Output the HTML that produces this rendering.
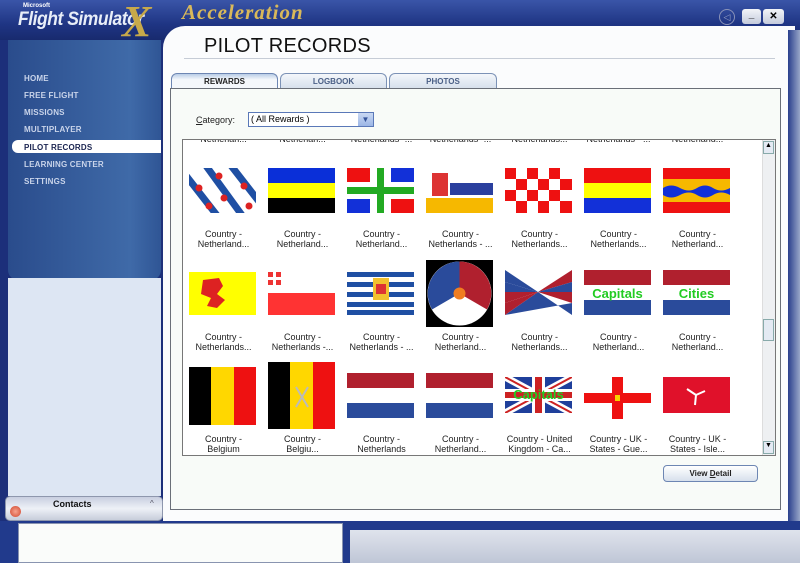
<!DOCTYPE html>
<html><head><meta charset="utf-8"><style>
*{margin:0;padding:0;box-sizing:border-box}
body{width:800px;height:563px;overflow:hidden;position:relative;font-family:"Liberation Sans",sans-serif;background:#1c2f7a}
.a{position:absolute}
.nav{position:absolute;left:24px;font-size:8px;font-weight:bold;color:#c9d4ea;letter-spacing:.2px}
.lbl{position:absolute;width:79px;text-align:center;font-size:9px;line-height:10px;color:#222}
.tab{position:absolute;top:73px;height:15px;font-size:8px;font-weight:bold;color:#4a5f86;text-align:center;line-height:15px;border:1px solid #7c92b6;border-bottom:none;border-radius:6px 6px 0 0;background:linear-gradient(#f4f7fb,#d7e0ec)}
svg{position:absolute}
</style></head><body>
<div class="a" style="left:0;top:0;width:800px;height:40px;background:linear-gradient(#3a55a8,#1f3584 60%,#182a6e)"></div>
<div class="a" style="font-size:6px;color:#fff;font-weight:bold;left:23px;top:3px">Microsoft</div>
<div class="a" style="left:18px;top:9px;font-size:19px;font-style:italic;font-weight:bold;color:#e8eef8;transform:scaleX(.92);transform-origin:left;letter-spacing:-.5px">Flight Simulator</div>
<div class="a" style="left:122px;top:-4px;font-size:44px;font-style:italic;font-weight:bold;color:#c7a94a;font-family:'Liberation Serif',serif">X</div>
<div class="a" style="left:182px;top:0px;font-size:21px;font-style:italic;font-weight:bold;color:#d9b95a;font-family:'Liberation Serif',serif;letter-spacing:1px">Acceleration</div>
<div class="a" style="left:40px;top:44px;width:120px;height:2px;background:#c7a94a"></div>
<div class="a" style="left:719px;top:9px;width:16px;height:16px;border-radius:50%;border:1px solid #8a93b8;color:#9aa3c6;font-size:9px;text-align:center;line-height:14px">◁</div>
<div class="a" style="left:742px;top:9px;width:19px;height:15px;border-radius:3px;background:linear-gradient(#f2f4f8,#c4cbdc);font-size:10px;text-align:center;line-height:12px;font-weight:bold">_</div>
<div class="a" style="left:763px;top:9px;width:21px;height:15px;border-radius:3px;background:linear-gradient(#f2f4f8,#c4cbdc);font-size:10px;text-align:center;line-height:15px;font-weight:bold">✕</div>
<div class="a" style="left:163px;top:26px;width:632px;height:497px;background:#fbfcfd;border-radius:22px 0 0 0"></div>
<div class="a" style="left:788px;top:30px;width:12px;height:533px;background:linear-gradient(90deg,#2a3f8d,#98a6c8)"></div>
<div class="a" style="left:204px;top:35px;font-size:20px;color:#111;letter-spacing:.3px">PILOT RECORDS</div>
<div class="a" style="left:184px;top:58px;width:591px;height:1px;background:#c6ccd6"></div>
<div class="a" style="left:8px;top:40px;width:153px;height:240px;background:linear-gradient(90deg,#2a4c8c,#3f6aa8 80%,#2f5595);border-radius:0 0 10px 10px"></div>
<div class="a" style="left:8px;top:278px;width:153px;height:218px;background:#dde6f3"></div>
<div class="nav" style="top:74px">HOME</div>
<div class="nav" style="top:91px">FREE FLIGHT</div>
<div class="nav" style="top:108px">MISSIONS</div>
<div class="nav" style="top:125px">MULTIPLAYER</div>
<div class="a" style="left:12px;top:140px;width:149px;height:13px;background:#fff;border-radius:6px 0 0 6px"></div>
<div class="nav" style="top:143px;color:#1a2450">PILOT RECORDS</div>
<div class="nav" style="top:160px">LEARNING CENTER</div>
<div class="nav" style="top:177px">SETTINGS</div>
<div class="a" style="left:5px;top:496px;width:158px;height:25px;background:linear-gradient(#c8cfe0,#eef1f7 50%,#c7cdda);border:1px solid #8e97ad;border-radius:5px"></div>
<div class="a" style="left:53px;top:499px;font-size:9px;font-weight:bold;color:#111">Contacts</div>
<div class="a" style="left:150px;top:499px;font-size:8px;color:#556">^</div>
<div class="a" style="left:10px;top:506px;width:11px;height:11px;border-radius:50%;background:radial-gradient(#f7a38e,#d0452c)"></div>
<div class="a" style="left:0;top:521px;width:800px;height:42px;background:#213a8c"></div>
<div class="a" style="left:350px;top:530px;width:450px;height:33px;background:linear-gradient(#dfe3ec,#bfc6d6)"></div>
<div class="a" style="left:18px;top:523px;width:325px;height:40px;background:#fafcfa;border:1px solid #8994b0"></div>
<div class="tab" style="left:171px;width:107px;color:#222;background:linear-gradient(#b9cde6,#f4f7fb 40%);border-color:#6d86b3">REWARDS</div>
<div class="tab" style="left:280px;width:107px">LOGBOOK</div>
<div class="tab" style="left:389px;width:108px">PHOTOS</div>
<div class="a" style="left:170px;top:88px;width:611px;height:422px;border:1px solid #6a6f78;background:#f8fbf8"></div>
<div class="a" style="left:196px;top:115px;font-size:9px;color:#222"><u>C</u>ategory:</div>
<div class="a" style="left:248px;top:112px;width:126px;height:15px;border:1px solid #5a78b8;background:#fff;font-size:9px;line-height:13px;padding-left:2px">( All Rewards )</div>
<div class="a" style="left:358px;top:113px;width:15px;height:13px;background:linear-gradient(#c9d8f3,#9cb6e6);color:#34539a;font-size:8px;text-align:center;line-height:13px">▼</div>
<div class="a" style="left:182px;top:139px;width:594px;height:317px;border:1px solid #777;background:#fff;overflow:hidden">
<div class="lbl" style="left:1px;top:-6px">Netherlan...</div>
<div class="lbl" style="left:80px;top:-6px">Netherlan...</div>
<div class="lbl" style="left:159px;top:-6px">Netherlands -...</div>
<div class="lbl" style="left:238px;top:-6px">Netherlands -...</div>
<div class="lbl" style="left:317px;top:-6px">Netherlands...</div>
<div class="lbl" style="left:396px;top:-6px">Netherlands - ...</div>
<div class="lbl" style="left:475px;top:-6px">Netherland...</div>
<div class="a" style="right:0;top:0;width:13px;height:315px;background:#eef0f2;border-left:1px solid #ddd"></div>
<div class="a" style="right:1px;top:1px;width:11px;height:13px;border:1px solid #8aa;background:#e4eaf3;font-size:7px;text-align:center">▲</div>
<div class="a" style="right:1px;top:179px;width:11px;height:22px;border:1px solid #8aa;background:#e4eaf3"></div>
<div class="a" style="right:1px;bottom:1px;width:11px;height:13px;border:1px solid #8aa;background:#e4eaf3;font-size:7px;text-align:center">▼</div>
</div>

<svg style="left:189px;top:168px" width="67" height="45"><rect width="67" height="45" fill="#fff"/><g stroke="#1f4fa3" stroke-width="7"><line x1="-5" y1="5" x2="30" y2="50"/><line x1="15" y1="-5" x2="55" y2="50"/><line x1="40" y1="-5" x2="75" y2="40"/></g><g fill="#d22"><circle cx="10" cy="20" r="3.5"/><circle cx="30" cy="8" r="3.5"/><circle cx="35" cy="30" r="3.5"/><circle cx="55" cy="18" r="3.5"/><circle cx="60" cy="38" r="3.5"/><circle cx="20" cy="38" r="3.5"/></g></svg>
<svg style="left:268px;top:168px" width="67" height="45"><rect width="67" height="15" fill="#0a2fd8"/><rect y="15" width="67" height="15" fill="#ff0"/><rect y="30" width="67" height="15" fill="#000"/></svg>
<svg style="left:347px;top:168px" width="67" height="45"><rect width="67" height="45" fill="#fff"/><rect x="0" y="0" width="23" height="14" fill="#e11"/><rect x="44" y="0" width="23" height="14" fill="#1230d8"/><rect x="0" y="31" width="23" height="14" fill="#1230d8"/><rect x="44" y="31" width="23" height="14" fill="#e11"/><rect x="0" y="19" width="67" height="7" fill="#2a2"/><rect x="30" y="0" width="7" height="45" fill="#2a2"/></svg>
<svg style="left:426px;top:168px" width="67" height="45"><rect width="67" height="45" fill="#fff"/><rect y="30" width="67" height="15" fill="#f6b800"/><rect x="24" y="15" width="43" height="12" fill="#2a3f9e"/><path d="M6 5 L22 5 L22 28 L6 28Z" fill="#d33"/></svg>
<svg style="left:505px;top:168px" width="67" height="45"><rect width="67" height="45" fill="#fff"/><g fill="#e11"><rect x="0" y="0" width="11" height="11"/><rect x="22" y="0" width="11" height="11"/><rect x="44" y="0" width="11" height="11"/><rect x="11" y="11" width="11" height="11"/><rect x="33" y="11" width="11" height="11"/><rect x="55" y="11" width="12" height="11"/><rect x="0" y="22" width="11" height="11"/><rect x="22" y="22" width="11" height="11"/><rect x="44" y="22" width="11" height="11"/><rect x="11" y="33" width="11" height="12"/><rect x="33" y="33" width="11" height="12"/><rect x="55" y="33" width="12" height="12"/></g></svg>
<svg style="left:584px;top:168px" width="67" height="45"><rect width="67" height="15" fill="#e11"/><rect y="15" width="67" height="15" fill="#ff0"/><rect y="30" width="67" height="15" fill="#1230d8"/></svg>
<svg style="left:663px;top:168px" width="67" height="45"><rect width="67" height="45" fill="#f7b800"/><rect width="67" height="11" fill="#e11"/><rect y="34" width="67" height="11" fill="#e11"/><path d="M0 20 Q8 15 17 20 T34 20 T50 20 T67 20 V27 Q58 22 50 27 T34 27 T17 27 T0 27Z" fill="#1230d8"/></svg>
<div class="lbl" style="left:184px;top:229px">Country -<br>Netherland...</div>
<div class="lbl" style="left:263px;top:229px">Country -<br>Netherland...</div>
<div class="lbl" style="left:342px;top:229px">Country -<br>Netherland...</div>
<div class="lbl" style="left:421px;top:229px">Country -<br>Netherlands - ...</div>
<div class="lbl" style="left:500px;top:229px">Country -<br>Netherlands...</div>
<div class="lbl" style="left:579px;top:229px">Country -<br>Netherlands...</div>
<div class="lbl" style="left:658px;top:229px">Country -<br>Netherland...</div>

<svg style="left:189px;top:272px" width="67" height="43"><rect width="67" height="43" fill="#ff0"/><path d="M14 8 L30 6 L34 14 L28 22 L36 28 L28 36 L18 34 L22 26 L12 22 Z" fill="#d22"/></svg>
<svg style="left:268px;top:270px" width="67" height="45"><rect width="67" height="45" fill="#fff"/><rect y="23" width="67" height="22" fill="#f33"/><rect x="0" y="2" width="5" height="5" fill="#e33"/><rect x="8" y="2" width="5" height="5" fill="#e33"/><rect x="0" y="10" width="5" height="5" fill="#e33"/><rect x="8" y="10" width="5" height="5" fill="#e33"/></svg>
<svg style="left:347px;top:272px" width="67" height="43"><rect width="67" height="43" fill="#fff"/><g fill="#1f4fa3"><rect y="0" width="67" height="5"/><rect y="10" width="67" height="5"/><rect y="20" width="67" height="5"/><rect y="30" width="67" height="5"/><rect y="38" width="67" height="5"/></g><rect x="26" y="6" width="16" height="22" fill="#f2c12e"/><rect x="29" y="12" width="10" height="10" fill="#d33"/></svg>
<svg style="left:426px;top:260px" width="67" height="67"><rect width="67" height="67" fill="#000"/><circle cx="33.5" cy="33.5" r="32" fill="#fff"/><path d="M33.5 33.5 L33.5 1.5 A32 32 0 0 1 61 49.5Z" fill="#b0202e"/><path d="M33.5 33.5 L33.5 1.5 A32 32 0 0 0 6 49.5Z" fill="#2a4b9b"/><circle cx="33.5" cy="33.5" r="6" fill="#f07d20"/></svg>
<svg style="left:505px;top:270px" width="67" height="45"><rect width="67" height="45" fill="#fff"/><path d="M0 0 L33 22 L67 0 L67 12 L33 22Z" fill="#b0202e"/><path d="M0 0 L0 12 L33 22Z" fill="#2a4b9b"/><path d="M0 45 L33 22 L67 45 L67 33Z" fill="#2a4b9b"/><path d="M0 45 L0 33 L33 22Z" fill="#b0202e"/><path d="M0 12 L33 22 L0 22Z M67 12 L33 22 L67 22Z" fill="#2a4b9b"/><path d="M0 22 L33 22 L0 33Z M67 22 L33 22 L67 33Z" fill="#b0202e"/></svg>
<svg style="left:584px;top:270px" width="67" height="45"><rect width="67" height="45" fill="#fff"/><rect width="67" height="15" fill="#b0202e"/><rect y="30" width="67" height="15" fill="#2a4b9b"/><text x="33.5" y="28" text-anchor="middle" font-family="Liberation Sans" font-weight="bold" font-size="13" fill="#2c2">Capitals</text></svg>
<svg style="left:663px;top:270px" width="67" height="45"><rect width="67" height="45" fill="#fff"/><rect width="67" height="15" fill="#b0202e"/><rect y="30" width="67" height="15" fill="#2a4b9b"/><text x="33.5" y="28" text-anchor="middle" font-family="Liberation Sans" font-weight="bold" font-size="13" fill="#2c2">Cities</text></svg>
<div class="lbl" style="left:184px;top:332px">Country -<br>Netherlands...</div>
<div class="lbl" style="left:263px;top:332px">Country -<br>Netherlands -...</div>
<div class="lbl" style="left:342px;top:332px">Country -<br>Netherlands - ...</div>
<div class="lbl" style="left:421px;top:332px">Country -<br>Netherland...</div>
<div class="lbl" style="left:500px;top:332px">Country -<br>Netherlands...</div>
<div class="lbl" style="left:579px;top:332px">Country -<br>Netherland...</div>
<div class="lbl" style="left:658px;top:332px">Country -<br>Netherland...</div>

<svg style="left:189px;top:367px" width="67" height="58"><rect width="22" height="58" fill="#000"/><rect x="22" width="23" height="58" fill="#ffd700"/><rect x="45" width="22" height="58" fill="#e11"/></svg>
<svg style="left:268px;top:362px" width="67" height="67"><rect width="22" height="67" fill="#000"/><rect x="22" width="23" height="67" fill="#ffd700"/><rect x="45" width="22" height="67" fill="#e11"/><path d="M28 25 L40 45 M40 25 L28 45" stroke="#bbb" stroke-width="2"/></svg>
<svg style="left:347px;top:373px" width="67" height="45"><rect width="67" height="45" fill="#fff"/><rect width="67" height="15" fill="#b0202e"/><rect y="30" width="67" height="15" fill="#2a4b9b"/></svg>
<svg style="left:426px;top:373px" width="67" height="45"><rect width="67" height="45" fill="#fff"/><rect width="67" height="15" fill="#b0202e"/><rect y="30" width="67" height="15" fill="#2a4b9b"/></svg>
<svg style="left:505px;top:377px" width="67" height="36"><rect width="67" height="36" fill="#1f3f9b"/><path d="M0 0 L67 36 M67 0 L0 36" stroke="#fff" stroke-width="7"/><path d="M0 0 L67 36 M67 0 L0 36" stroke="#c22" stroke-width="2"/><rect x="27" width="13" height="36" fill="#fff"/><rect y="12" width="67" height="12" fill="#fff"/><rect x="30" width="7" height="36" fill="#c22"/><rect y="15" width="67" height="6" fill="#c22"/><text x="33.5" y="22" text-anchor="middle" font-family="Liberation Sans" font-weight="bold" font-size="13" fill="#2c2">Capitals</text></svg>
<svg style="left:584px;top:377px" width="67" height="42"><rect width="67" height="42" fill="#fff"/><rect x="28" width="11" height="42" fill="#e11"/><rect y="16" width="67" height="10" fill="#e11"/><rect x="31" y="18" width="5" height="6" fill="#f7d000"/></svg>
<svg style="left:663px;top:377px" width="67" height="36"><rect width="67" height="36" fill="#e0112a"/><path d="M33 18 L24 12 M33 18 L42 14 M33 18 L32 28" stroke="#fff" stroke-width="2"/></svg>
<div class="lbl" style="left:184px;top:434px">Country -<br>Belgium</div>
<div class="lbl" style="left:263px;top:434px">Country -<br>Belgiu...</div>
<div class="lbl" style="left:342px;top:434px">Country -<br>Netherlands</div>
<div class="lbl" style="left:421px;top:434px">Country -<br>Netherland...</div>
<div class="lbl" style="left:500px;top:434px">Country - United<br>Kingdom - Ca...</div>
<div class="lbl" style="left:579px;top:434px">Country - UK -<br>States - Gue...</div>
<div class="lbl" style="left:658px;top:434px">Country - UK -<br>States - Isle...</div>

<div class="a" style="left:663px;top:465px;width:95px;height:17px;border:1px solid #6d86b3;border-radius:4px;background:linear-gradient(#fff,#d7e0ec);font-size:8px;font-weight:bold;text-align:center;line-height:15px;color:#222">View <u>D</u>etail</div>
</body></html>
